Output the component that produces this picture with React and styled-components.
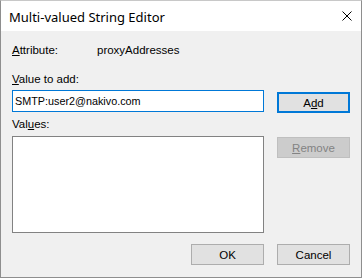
import React from "react";
import styled, { createGlobalStyle } from "styled-components";

const Global = createGlobalStyle`
  html, body { margin: 0; padding: 0; background: #ffffff; }
  * { box-sizing: border-box; }
`;

const Window = styled.div`
  width: 362px;
  height: 278px;
  border: 1px solid #8e8e8e;
  border-top-color: #c8c8c8;
  display: flex;
  flex-direction: column;
  background: #f0f0f0;
  font-family: "Liberation Sans", Arial, sans-serif;
  font-size: 11.5px;
  color: #000;
`;

const TitleBar = styled.div`
  height: 30px;
  background: #ffffff;
  display: flex;
  align-items: center;
  justify-content: space-between;
  padding: 0 9px 0 8px;
  flex-shrink: 0;
`;

const Title = styled.div`
  font-family: "Noto Sans", "Open Sans", sans-serif;
  font-size: 13px;
  margin-top: 1px;
`;

const Close = styled.svg`
  width: 10px;
  height: 10px;
`;

const Body = styled.div`
  flex: 1;
  padding: 12px 11px 0 11px;
  display: flex;
  flex-direction: column;
`;

const AttrRow = styled.div`
  display: flex;
  align-items: center;
  height: 14px;
`;

const AttrLabel = styled.span`
  width: 85px;
`;

const Label = styled.div`
  height: 14px;
  line-height: 14px;
  margin-top: ${(p) => p.$mt}px;
`;

const U = styled.span`
  text-decoration: underline;
  text-underline-offset: 1px;
`;

const Row = styled.div`
  display: flex;
  gap: 13px;
  margin-top: ${(p) => p.$mt || 0}px;
`;

const TextBox = styled.div`
  width: 252px;
  height: 22px;
  border: 1px solid #0078d7;
  background: #fff;
  display: flex;
  align-items: center;
  padding-left: 2px;
  font-size: 10.8px;
`;

const ListBox = styled.div`
  width: 252px;
  height: 97px;
  border: 1px solid #828282;
  background: #fff;
`;

const SideCol = styled.div`
  display: flex;
  flex-direction: column;
  padding-top: ${(p) => p.$pt || 0}px;
`;

const Button = styled.div`
  width: 73px;
  height: 21px;
  display: flex;
  align-items: center;
  justify-content: center;
  background: ${(p) => (p.$disabled ? "#cccccc" : "#e1e1e1")};
  border: ${(p) =>
    p.$default ? "2px solid #0078d7" : p.$disabled ? "1px solid #bfbfbf" : "1px solid #adadad"};
  color: ${(p) => (p.$disabled ? "#838383" : "#000")};
  font-size: 11.5px;
`;

const Footer = styled.div`
  display: flex;
  justify-content: flex-end;
  gap: 13px;
  margin-top: 11px;
`;

export default function App() {
  return (
    <>
      <Global />
      <Window>
        <TitleBar>
          <Title>Multi-valued String Editor</Title>
          <Close viewBox="0 0 10 10">
            <path d="M0.5 0.5 L9.5 9.5 M9.5 0.5 L0.5 9.5" stroke="#000" strokeWidth="1" fill="none" />
          </Close>
        </TitleBar>
        <Body>
          <AttrRow>
            <AttrLabel>
              <U>A</U>ttribute:
            </AttrLabel>
            <span>proxyAddresses</span>
          </AttrRow>
          <Label $mt={15}>
            <U>V</U>alue to add:
          </Label>
          <Row $mt={4}>
            <TextBox>SMTP:user2@nakivo.com</TextBox>
            <SideCol $pt={2}>
              <Button $default>
                A<U>d</U>d
              </Button>
            </SideCol>
          </Row>
          <Label $mt={4}>
            Val<U>u</U>es:
          </Label>
          <Row $mt={5}>
            <ListBox />
            <SideCol $pt={1}>
              <Button $disabled>
                <U>R</U>emove
              </Button>
            </SideCol>
          </Row>
          <Footer>
            <Button>OK</Button>
            <Button>Cancel</Button>
          </Footer>
        </Body>
      </Window>
    </>
  );
}
